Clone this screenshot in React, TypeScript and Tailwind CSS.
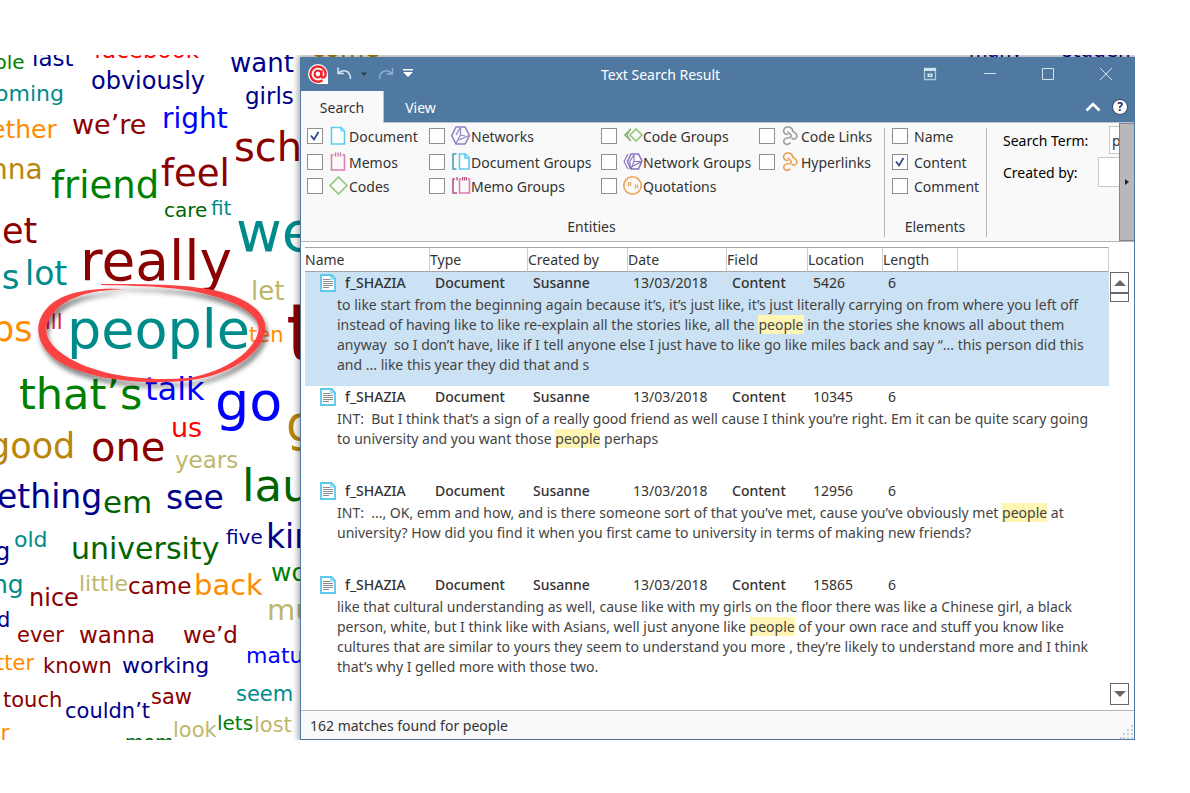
import React from "react";

type Word = { t: string; x: number; y: number; s: number; c: string };

const NAVY = "#00008b";
const TEAL = "#008b8b";
const GREEN = "#008000";
const DGREEN = "#006400";
const MAROON = "#8b0000";
const ORANGE = "#ff8c00";
const GOLD = "#b8860b";
const KHAKI = "#bdb76b";
const RED = "#ff0000";
const BLUE = "#0000ff";

/* x is the left origin, y the baseline, s the size of each word */
const words: Word[] = [
  { t: "ple", x: -6, y: 14, s: 20, c: GREEN },
  { t: "last", x: 32, y: 11, s: 23, c: NAVY },
  { t: "facebook", x: 94, y: 3, s: 23, c: RED },
  { t: "want", x: 230, y: 17, s: 26, c: NAVY },
  { t: "obviously", x: 91, y: 34, s: 24, c: NAVY },
  { t: "girls", x: 245, y: 49, s: 23, c: NAVY },
  { t: "oming", x: -5, y: 47, s: 22, c: TEAL },
  { t: "ether", x: -10, y: 83, s: 25, c: ORANGE },
  { t: "we’re", x: 72, y: 79, s: 27, c: MAROON },
  { t: "right", x: 162, y: 74, s: 28, c: BLUE },
  { t: "sch", x: 234, y: 106, s: 40, c: MAROON },
  { t: "nna", x: -10, y: 125, s: 28, c: GOLD },
  { t: "friend", x: 51, y: 143, s: 37, c: GREEN },
  { t: "feel", x: 161, y: 131, s: 37, c: MAROON },
  { t: "care", x: 164, y: 162, s: 20, c: DGREEN },
  { t: "fit", x: 211, y: 160, s: 20, c: TEAL },
  { t: "et", x: 2, y: 189, s: 35, c: MAROON },
  { t: "we", x: 236, y: 196, s: 56, c: TEAL },
  { t: "’s", x: -9, y: 234, s: 34, c: TEAL },
  { t: "lot", x: 25, y: 230, s: 33, c: TEAL },
  { t: "really", x: 80, y: 226, s: 55, c: MAROON },
  { t: "let", x: 251, y: 245, s: 26, c: KHAKI },
  { t: "ps", x: -8, y: 287, s: 35, c: ORANGE },
  { t: "ill", x: 45, y: 275, s: 21, c: "#dc143c" },
  { t: "people", x: 67, y: 294, s: 54, c: TEAL },
  { t: "ten", x: 249, y: 288, s: 21, c: ORANGE },
  { t: "t", x: 286, y: 307, s: 80, c: MAROON },
  { t: "that’s", x: 19, y: 354, s: 43, c: GREEN },
  { t: "talk", x: 145, y: 345, s: 32, c: BLUE },
  { t: "go", x: 215, y: 366, s: 54, c: BLUE },
  { t: "us", x: 171, y: 382, s: 27, c: RED },
  { t: "g", x: 286, y: 386, s: 49, c: GOLD },
  { t: "good", x: -12, y: 404, s: 35, c: GOLD },
  { t: "one", x: 91, y: 406, s: 40, c: MAROON },
  { t: "years", x: 175, y: 413, s: 23, c: KHAKI },
  { t: "lau", x: 242, y: 446, s: 45, c: DGREEN },
  { t: "ething", x: -3, y: 453, s: 33, c: NAVY },
  { t: "em", x: 103, y: 458, s: 31, c: DGREEN },
  { t: "see", x: 166, y: 454, s: 33, c: NAVY },
  { t: "old", x: 14, y: 493, s: 22, c: TEAL },
  { t: "g", x: -5, y: 505, s: 24, c: NAVY },
  { t: "university", x: 71, y: 504, s: 30, c: DGREEN },
  { t: "five", x: 226, y: 489, s: 20, c: NAVY },
  { t: "kin", x: 266, y: 493, s: 33, c: NAVY },
  { t: "wo", x: 271, y: 526, s: 25, c: GREEN },
  { t: "ng", x: -8, y: 538, s: 25, c: TEAL },
  { t: "nice", x: 29, y: 551, s: 24, c: MAROON },
  { t: "little", x: 79, y: 537, s: 22, c: KHAKI },
  { t: "came", x: 128, y: 539, s: 23, c: MAROON },
  { t: "back", x: 194, y: 541, s: 29, c: ORANGE },
  { t: "mu", x: 267, y: 566, s: 29, c: KHAKI },
  { t: "d", x: -3, y: 573, s: 21, c: NAVY },
  { t: "ever", x: 17, y: 588, s: 21, c: MAROON },
  { t: "wanna", x: 79, y: 588, s: 23, c: MAROON },
  { t: "we’d", x: 183, y: 588, s: 23, c: MAROON },
  { t: "tter", x: -4, y: 616, s: 21, c: ORANGE },
  { t: "known", x: 43, y: 619, s: 21, c: MAROON },
  { t: "working", x: 122, y: 619, s: 22, c: NAVY },
  { t: "matu", x: 246, y: 609, s: 22, c: BLUE },
  { t: "touch", x: 3, y: 653, s: 21, c: MAROON },
  { t: "couldn’t", x: 65, y: 664, s: 21, c: NAVY },
  { t: "saw", x: 151, y: 650, s: 21, c: MAROON },
  { t: "seem", x: 236, y: 647, s: 21, c: TEAL },
  { t: "look", x: 173, y: 683, s: 21, c: KHAKI },
  { t: "lets", x: 217, y: 675, s: 20, c: GREEN },
  { t: "lost", x: 254, y: 678, s: 21, c: KHAKI },
  { t: "er", x: -13, y: 686, s: 22, c: ORANGE },
  { t: "mom", x: 125, y: 694, s: 19, c: DGREEN },
  { t: "come", x: 311, y: 2, s: 25, c: GOLD },
  { t: "many", x: 969, y: 2, s: 19, c: NAVY },
  { t: "studen", x: 1062, y: 2, s: 20, c: NAVY },
];

function WordCloud() {
  return (
    <div className="absolute inset-0 font-['Verdana','DejaVu_Sans',sans-serif]">
      {words.map((w, i) => (
        <span
          key={i}
          className="absolute leading-none whitespace-nowrap"
          style={{ left: w.x, top: Math.round(w.y - w.s * 0.846), fontSize: w.s, color: w.c }}
        >
          {w.t}
        </span>
      ))}
      <svg className="absolute top-[220px] left-[30px] h-[120px] w-[250px]" viewBox="30 275 250 120" aria-hidden="true">
        <defs>
          <filter id="mark-shadow" x="-10%" y="-10%" width="120%" height="130%">
            <feDropShadow dx="2" dy="5" stdDeviation="2.5" floodColor="#000" floodOpacity="0.5" />
          </filter>
        </defs>
        <path
          filter="url(#mark-shadow)"
          fill="#fb4243"
          d="M101 284 C150 284 190 284 222 292 C250 300 266 313 265.500 329 C264 352 232 375 188 380.500 C140 386 84 378 58 361 C36 346 31 323 50 305 C66 291 98 287 126 289.500 C98 289 72 295 58 308 C42 324 42 338 60 352 C88 374 140 382 188 378 C226 372 256 350 258.500 330 C260 316 240 304 216 297 C185 287 150 286 101 285 Z"
        />
      </svg>
    </div>
  );
}

const svgBase = "h-5 w-5 shrink-0";

const DocumentIcon = () => (
  <svg className={svgBase} viewBox="0 0 20 20" fill="none" stroke="#5bcbee" strokeWidth="1.600">
    <path d="M2.500 1.500h9.500l3.500 3.500V18H2.500z" fill="#fff" />
    <path d="M12 1.500v3.500H15.500" strokeWidth="1.200" />
  </svg>
);
const MemoIcon = () => (
  <svg className={svgBase} viewBox="0 0 20 20" fill="none" stroke="#dd7cb8" strokeWidth="1.600">
    <path d="M4.500 3H2.500v15h13V3h-2" />
    <path d="M6.500 .500v4M9 .500v4M11.500 .500v4" stroke="#c9779f" strokeWidth="1.300" />
  </svg>
);
const CodeIcon = () => (
  <svg className={svgBase} viewBox="0 0 20 20" fill="none" stroke="#94c97c" strokeWidth="1.700">
    <path d="M9.500 1l8.500 8.500-8.500 8.500L1 9.500z" />
  </svg>
);
const NetworkIcon = () => (
  <svg className={svgBase} viewBox="0 0 20 20" fill="none" stroke="#9182c6" strokeWidth="1.600">
    <path d="M5 1h9l4.500 8.500-4.500 8.500H5L.800 9.500z" />
    <path d="M9.500 1v8l-4.500 8.500M9.500 9l4.500 1M9.500 1L5 9M18 9.500L8 14" strokeWidth="1.200" />
  </svg>
);
const DocumentGroupIcon = () => (
  <svg className={svgBase} viewBox="0 0 20 20" fill="none" stroke="#5bcbee" strokeWidth="1.600">
    <path d="M5.500 2H2v15h3.500" stroke="#4d9db5" />
    <path d="M8.500 2h6l3.500 3.500V17H8.500z" fill="#fff" />
    <path d="M14 2v4h4" />
  </svg>
);
const MemoGroupIcon = () => (
  <svg className={svgBase} viewBox="0 0 20 20" fill="none" stroke="#dd7cb8" strokeWidth="1.600">
    <path d="M4 3H2v14h4" stroke="#b5557f" />
    <path d="M10 3H8.500v14H18.500V3H17" />
    <path d="M6 1v3.500M11.500 1v3.500M13.500 1v3.500M15.500 1v3.500" strokeWidth="1.300" stroke="#b5557f" />
  </svg>
);
const CodeGroupIcon = () => (
  <svg className={svgBase} viewBox="0 0 20 20" fill="none" stroke="#94c97c" strokeWidth="1.600">
    <path d="M13 3l6 6-6 6-6-6z" />
    <path d="M8 3L2 9l6 6" stroke="#7fa873" />
    <path d="M6.500 6.500L4 9l2.500 2.500" strokeWidth="1" stroke="#7fa873" />
  </svg>
);
const NetworkGroupIcon = () => (
  <svg className={svgBase} viewBox="0 0 20 20" fill="none" stroke="#8672be" strokeWidth="1.500">
    <path d="M8 2h7.500l3.500 7-3.500 8H8L4.500 9.500z" />
    <path d="M5 2L1 9.500 5 17M11 3v6.500L8 17M11 9.500h8M11 3L7 9v8M18 10L8 15" strokeWidth="1.100" />
  </svg>
);
const QuoteIcon = () => (
  <svg className={svgBase} viewBox="0 0 20 20" fill="none" stroke="#eba45c" strokeWidth="1.600">
    <circle cx="9.500" cy="9.500" r="8.700" />
    <path d="M5.500 6v4M7.500 6v4M12.500 8.500v4M14.500 8.500v4" strokeWidth="1.300" />
  </svg>
);
const LinkShape = ({ color }: { color: string }) => (
  <svg className={svgBase} viewBox="0 0 20 20" fill="none" stroke={color} strokeWidth="1.600" strokeLinecap="round">
    <path d="M6.500 8.500C3 8.500 2 5.500 3 3.200C4 .800 7.500 .500 9.500 1.500C11 2.300 11.500 3.500 12 5.200L14.800 7.500C17 10 15.500 13.200 12.500 13.200L11 12.500" />
    <path d="M7 6l3 3c1 1.500-.500 2.500-2.500 2.800C4 12 2.500 13.500 2.800 15.800C3.200 18.500 6.500 19.200 9 17.200" />
  </svg>
);
const CodeLinkIcon = () => <LinkShape color="#9b9b9b" />;
const HyperlinkIcon = () => <LinkShape color="#ec9f53" />;

function Tick({ label, icon, checked }: { label: string; icon?: React.ReactNode; checked?: boolean }) {
  return (
    <label className="flex items-center whitespace-nowrap">
      <span className="relative mr-1.5 flex">
        <input
          type="checkbox"
          defaultChecked={checked}
          className="peer h-4 w-4 appearance-none border border-[#8f8f8f] bg-white"
        />
        <svg
          className="pointer-events-none absolute inset-0 hidden h-4 w-4 peer-checked:block"
          viewBox="0 0 16 16"
          fill="none"
          stroke="#2f4a86"
          strokeWidth="1.800"
        >
          <path d="M4 7.500l3 4L11.500 4" />
        </svg>
      </span>
      {icon}
      <span className="pt-0.5">{label}</span>
    </label>
  );
}

function Ribbon() {
  return (
    <div className="flex h-[119px] overflow-hidden border-b border-[#b5b5b5] bg-[#f9f9f9] text-[#333]">
      <fieldset className="flex shrink-0 flex-col pl-1.5">
        <div className="grid grid-flow-col grid-cols-[122px_172px_158px_121px] grid-rows-[26px_26px_22px]">
          <Tick label="Document" icon={<DocumentIcon />} checked />
          <Tick label="Memos" icon={<MemoIcon />} />
          <Tick label="Codes" icon={<CodeIcon />} />
          <Tick label="Networks" icon={<NetworkIcon />} />
          <Tick label="Document Groups" icon={<DocumentGroupIcon />} />
          <Tick label="Memo Groups" icon={<MemoGroupIcon />} />
          <Tick label="Code Groups" icon={<CodeGroupIcon />} />
          <Tick label="Network Groups" icon={<NetworkGroupIcon />} />
          <Tick label="Quotations" icon={<QuoteIcon />} />
          <Tick label="Code Links" icon={<CodeLinkIcon />} />
          <Tick label="Hyperlinks" icon={<HyperlinkIcon />} />
        </div>
        <p className="mt-5 pr-1 text-center leading-5">Entities</p>
      </fieldset>
      <div className="mx-1 mt-[5px] mb-1 w-px shrink-0 bg-[#b8b8b8]" />
      <fieldset className="flex w-[97px] shrink-0 flex-col pl-[3px]">
        <div className="grid grid-rows-[26px_26px_22px]">
          <Tick label="Name" />
          <Tick label="Content" checked />
          <Tick label="Comment" />
        </div>
        <p className="mt-5 pr-2 text-center leading-5">Elements</p>
      </fieldset>
      <div className="mt-[5px] mb-1 w-px shrink-0 bg-[#b8b8b8]" />
      <div className="min-w-0 flex-1 overflow-hidden pt-[3px] pl-4 text-black">
        <div className="flex h-7 items-center">
          <label htmlFor="term" className="w-[106px] shrink-0 pt-0.5">Search Term:</label>
          <input id="term" defaultValue="people" className="h-7 w-[180px] shrink-0 border border-[#c8c8c8] bg-white px-0.5 text-[#333]" />
        </div>
        <div className="mt-[3px] flex h-[30px] items-center">
          <label htmlFor="author" className="w-[95px] shrink-0 pt-0.5">Created by:</label>
          <select id="author" className="h-[30px] w-[190px] shrink-0 appearance-none border border-[#c8c8c8] bg-white" />
        </div>
      </div>
      <button aria-label="Scroll ribbon" className="flex w-[15px] shrink-0 items-center justify-center border border-[#8d7f92] border-r-0 bg-[#b8b8b8]">
        <svg className="h-2 w-1" viewBox="0 0 4 8"><path d="M0 1l4 3-4 3z" fill="#222" /></svg>
      </button>
    </div>
  );
}

function TitleBar() {
  return (
    <header className="bg-[#5079a2] text-white">
      <div className="flex h-[34px] items-center">
        <div className="flex w-[284px] shrink-0 items-center pl-[7px]">
          <svg className="h-5 w-5" viewBox="0 0 20 20" fill="none">
            <path d="M10 0A10 10 0 1 0 10 20H20V10A10 10 0 0 0 10 0z" fill="#fff" />
            <path d="M14.500 16.200A7.600 7.600 0 1 1 17.600 10c0 3-1.600 3.800-2.800 3.500-1-.300-1.300-1-1.300-2V6.200" stroke="#f0262c" strokeWidth="2.400" />
            <ellipse cx="9.900" cy="10" rx="3.300" ry="3.500" stroke="#f0262c" strokeWidth="2.200" />
          </svg>
          <button aria-label="Undo" className="ml-2">
            <svg className="h-4 w-4" viewBox="0 0 16 16" fill="none" stroke="#d5e2ee" strokeWidth="1.500">
              <path d="M2 1.500v6h6M2 7.500C6 3 14.500 3.500 14.500 13" />
            </svg>
          </button>
          <button aria-label="Undo history" className="ml-2">
            <svg className="h-4 w-2" viewBox="0 0 8 16"><path d="M1 6.500h6l-3 3.500z" fill="#2c3e50" /></svg>
          </button>
          <button aria-label="Redo" className="ml-2.5">
            <svg className="h-4 w-4" viewBox="0 0 16 16" fill="none" stroke="#8fb0cf" strokeWidth="1.400">
              <path d="M14.500 2v6h-6M14.500 8C9 2 1.500 5 1.500 13" />
            </svg>
          </button>
          <button aria-label="Customize toolbar" className="ml-2">
            <svg className="h-4 w-3" viewBox="0 0 12 16" fill="#fff"><path d="M1 3h10v1.500H1zM1 6h10l-5 5z" /></svg>
          </button>
        </div>
        <h1 className="px-4 pt-0.5 whitespace-nowrap">Text Search Result</h1>
        <div className="flex flex-1 items-center justify-end pr-[21px]">
          <button aria-label="Ribbon display" className="mr-[47px]">
            <svg className="h-3.5 w-3.5" viewBox="0 0 14 14" fill="none">
              <path d="M1.500 1.500h11v11h-11z" stroke="#a9cbdc" strokeWidth="1.300" />
              <path d="M1 1h12v3H1z" fill="#cfe3ef" />
              <path d="M4.500 6.500h5v3.500h-5z" fill="#d9edf5" />
              <path d="M6 8.200h2" stroke="#5079a2" />
            </svg>
          </button>
          <button aria-label="Minimize" className="mr-[46px]">
            <svg className="h-3.5 w-3" viewBox="0 0 12 14" stroke="#d3e2ee"><path d="M0 6.500h12" /></svg>
          </button>
          <button aria-label="Maximize" className="mr-[45px]">
            <svg className="h-3.5 w-3" viewBox="0 0 12 14" fill="none" stroke="#d3e2ee"><path d="M.500 1.500h11v11H.500z" /></svg>
          </button>
          <button aria-label="Close">
            <svg className="h-3.5 w-3.5" viewBox="0 0 14 14" stroke="#d3e2ee"><path d="M1 1l12 12M13 1L1 13" /></svg>
          </button>
        </div>
      </div>
      <div className="flex h-[32px] items-stretch border-b border-[#b9c3cc]">
        <button className="-mb-px w-[83px] border-r border-[#b9c3cc] bg-[#f9f9f9] pt-px text-[#333]">Search</button>
        <button className="w-[73px] pt-0.5">View</button>
        <div className="flex flex-1 items-center justify-end pr-1.5">
          <button aria-label="Collapse ribbon" className="mr-[11px]">
            <svg className="h-4 w-4" viewBox="0 0 16 16" fill="none" stroke="#fff" strokeWidth="2.600"><path d="M1.500 11.500L8 5l6.500 6.500" /></svg>
          </button>
          <button aria-label="Help" className="flex h-4 w-4 items-center justify-center rounded-full border border-[#3f3f66] bg-white text-[12px] leading-none font-bold text-[#2d2d50]">
            ?
          </button>
        </div>
      </div>
    </header>
  );
}

type Hit = { location: string; lines: string[]; selected?: boolean };

const hits: Hit[] = [
  {
    location: "5426",
    selected: true,
    lines: [
      "to like start from the beginning again because it’s, it’s just like, it’s just literally carrying on from where you left off",
      "instead of having like to like re-explain all the stories like, all the *people* in the stories she knows all about them",
      "anyway  so I don’t have, like if I tell anyone else I just have to like go like miles back and say “... this person did this",
      "and ... like this year they did that and s",
    ],
  },
  {
    location: "10345",
    lines: [
      "INT:  But I think that’s a sign of a really good friend as well cause I think you’re right. Em it can be quite scary going",
      "to university and you want those *people* perhaps",
    ],
  },
  {
    location: "12956",
    lines: [
      "INT:  ..., OK, emm and how, and is there someone sort of that you’ve met, cause you’ve obviously met *people* at",
      "university? How did you find it when you first came to university in terms of making new friends?",
    ],
  },
  {
    location: "15865",
    lines: [
      "like that cultural understanding as well, cause like with my girls on the floor there was like a Chinese girl, a black",
      "person, white, but I think like with Asians, well just anyone like *people* of your own race and stuff you know like",
      "cultures that are similar to yours they seem to understand you more , they’re likely to understand more and I think",
      "that’s why I gelled more with those two.",
    ],
  },
];

const PageIcon = () => (
  <svg className="h-[18px] w-4 shrink-0" viewBox="0 0 16 18" fill="none">
    <path d="M1 1h10.500L15 4.500V17H1z" fill="#fff" stroke="#5bc8ec" strokeWidth="1.800" />
    <path d="M11 1v4h4" stroke="#5bc8ec" strokeWidth="1.200" />
    <path d="M3 5.500h7M3 7.500h10M3 9.500h10M3 11.500h10M3 13.500h6" stroke="#8a8a8a" strokeWidth="1" />
  </svg>
);

function Line({ text }: { text: string }) {
  return (
    <span className="block whitespace-pre">
      {text.split("*").map((part, i) =>
        i % 2 ? <mark key={i} className="bg-[#fff5b5] text-inherit">{part}</mark> : part
      )}
    </span>
  );
}

function Results() {
  const head = "border-r border-[#cfcfcf] p-0 text-left font-normal";
  return (
    <div className="flex flex-1 bg-white pt-[5px] pr-[5px] pl-1">
      <table className="w-0 flex-1 table-fixed border-separate border-spacing-0 self-start text-[#333]">
        <colgroup>
          <col className="w-[125px]" />
          <col className="w-[98px]" />
          <col className="w-[100px]" />
          <col className="w-[99px]" />
          <col className="w-[81px]" />
          <col className="w-[75px]" />
          <col className="w-[75px]" />
          <col />
        </colgroup>
        <thead>
          <tr className="h-[25px] *:border-t *:border-b *:border-t-[#a5a5a5] *:border-b-[#a5a5a5]">
            {["Name", "Type", "Created by", "Date", "Field", "Location", "Length", ""].map((h) => (
              <th key={h} className={head}>{h}</th>
            ))}
          </tr>
        </thead>
        {hits.map((h) => (
          <tbody key={h.location} className={h.selected ? "bg-[#cbe1f4]" : ""}>
            <tr className="h-[21px] font-medium *:p-0 *:pl-[5px]">
              <td>
                <div className="flex items-center gap-[9px] pl-2.5">
                  <PageIcon />
                  f_SHAZIA
                </div>
              </td>
              <td>Document</td>
              <td>Susanne</td>
              <td className="font-normal">13/03/2018</td>
              <td>Content</td>
              <td className="font-normal">{h.location}</td>
              <td className="font-normal">6</td>
              <td />
            </tr>
            <tr>
              <td colSpan={8} className="h-[73px] p-0 pt-0.5 pb-[11px] pl-8 align-top leading-5 text-[#444]">
                {h.lines.map((l) => (
                  <Line key={l} text={l} />
                ))}
              </td>
            </tr>
          </tbody>
        ))}
      </table>
      <div className="flex w-5 flex-col items-end pt-[25px] pb-[5px]">
        <button aria-label="Scroll up" className="flex h-[22px] w-[19px] items-center justify-center border border-b-2 border-[#66666c]">
          <svg className="h-1.5 w-3" viewBox="0 0 12 6"><path d="M6 0l6 6H0z" fill="#66666c" /></svg>
        </button>
        <div className="h-2 w-[19px] border border-t-0 border-[#66666c] bg-white" />
        <div className="flex-1" />
        <button aria-label="Scroll down" className="flex h-[22px] w-[19px] items-center justify-center border border-[#66666c]">
          <svg className="h-1.5 w-3" viewBox="0 0 12 6"><path d="M0 0h12L6 6z" fill="#66666c" /></svg>
        </button>
      </div>
    </div>
  );
}

export default function App() {
  return (
    <main className="min-h-screen bg-white pt-[55px] pr-[55px]">
      <div className="relative overflow-hidden pt-0.5 pl-[300px]">
        <WordCloud />
        <section className="relative flex min-h-[683px] flex-col border border-t-0 border-[#5079a2] bg-white font-['Segoe_UI','Noto_Sans',sans-serif] text-[14px] leading-5 shadow-[0_0_6px_2px_rgba(0,0,0,0.35)]">
          <TitleBar />
          <Ribbon />
          <Results />
          <footer className="flex h-[29px] items-center justify-between border-t border-[#b5b5b5] bg-[#f9f9f9] pl-[9px] text-[#333]">
            <span className="pt-0.5">162 matches found for people</span>
            <svg className="h-[14px] w-[14px] self-end" viewBox="0 0 14 14" fill="#c3cfdd">
              <path d="M11 0h2v2h-2zM7 4h2v2H7zM11 4h2v2h-2zM3 8h2v2H3zM7 8h2v2H7zM11 8h2v2h-2zM0 12h2v2H0zM3 12h2v2H3zM7 12h2v2H7zM11 12h2v2h-2z" />
            </svg>
          </footer>
        </section>
      </div>
    </main>
  );
}
